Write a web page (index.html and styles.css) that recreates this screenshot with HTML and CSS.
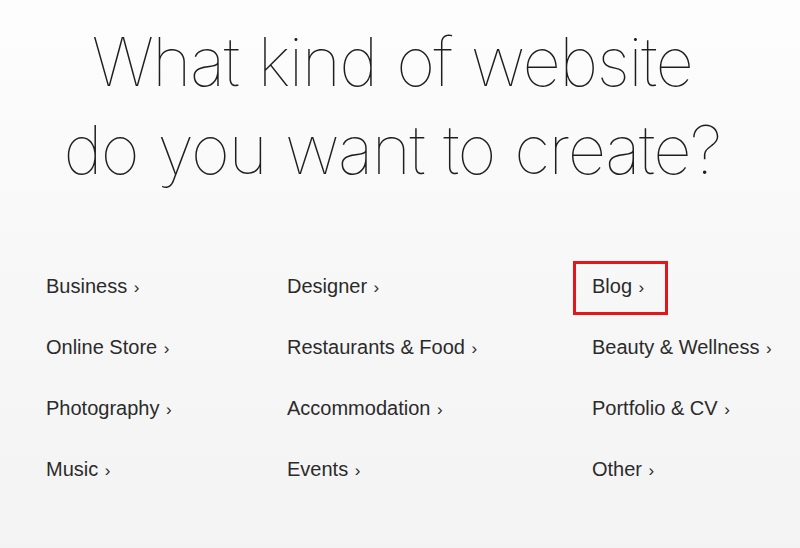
FILE: index.html
```html
<!DOCTYPE html>
<html lang="en">
<head>
<meta charset="utf-8">
<title>What kind of website</title>
<link rel="stylesheet" href="styles.css">
</head>
<body>
<main class="page">
  <h1 class="title">What kind of website<br>do you want to create?</h1>
  <ul class="types">
    <li class="type"><a href="#">Business <span class="chev">›</span></a></li>
    <li class="type"><a href="#">Designer <span class="chev">›</span></a></li>
    <li class="type type-marked"><a href="#">Blog <span class="chev">›</span></a></li>
    <li class="type"><a href="#">Online Store <span class="chev">›</span></a></li>
    <li class="type"><a href="#">Restaurants &amp; Food <span class="chev">›</span></a></li>
    <li class="type"><a href="#">Beauty &amp; Wellness <span class="chev">›</span></a></li>
    <li class="type"><a href="#">Photography <span class="chev">›</span></a></li>
    <li class="type"><a href="#">Accommodation <span class="chev">›</span></a></li>
    <li class="type"><a href="#">Portfolio &amp; CV <span class="chev">›</span></a></li>
    <li class="type"><a href="#">Music <span class="chev">›</span></a></li>
    <li class="type"><a href="#">Events <span class="chev">›</span></a></li>
    <li class="type"><a href="#">Other <span class="chev">›</span></a></li>
  </ul>
</main>
</body>
</html>
```

FILE: styles.css
```css
html, body {
  margin: 0;
  padding: 0;
}
body {
  width: 800px;
  height: 548px;
  overflow: hidden;
  background: linear-gradient(180deg, #fdfdfd 0%, #f8f8f8 45%, #f3f3f3 100%);
  font-family: "Liberation Sans", Arial, sans-serif;
  color: #2b2b2b;
}
.page {
  display: flex;
  flex-direction: column;
}
.title {
  margin: 18px 16px 0 0;
  font-family: Inter, "Liberation Sans", sans-serif;
  font-weight: 100;
  font-size: 67px;
  line-height: 88px;
  letter-spacing: -1.5px;
  word-spacing: 2px;
  text-align: center;
  color: #1e1e1e;
}
.types {
  list-style: none;
  margin: 80px 0 0 0;
  padding: 0 0 0 46px;
  display: grid;
  grid-template-columns: 241px 305px 1fr;
  grid-auto-rows: 61px;
}
.type {
  font-size: 20px;
  line-height: 24px;
  white-space: nowrap;
}
.type a {
  color: #2b2b2b;
  text-decoration: none;
}
.chev {
  font-size: 17px;
  margin-left: 1px;
}
.type-marked a {
  position: relative;
}
.type-marked a::before {
  content: "";
  position: absolute;
  left: -19px;
  top: -14px;
  width: 89px;
  height: 48px;
  border: 3px solid #e3161c;
}
```
